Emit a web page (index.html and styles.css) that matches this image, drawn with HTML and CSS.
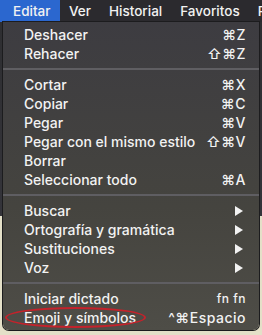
FILE: index.html
```html
<!DOCTYPE html>
<html>
<head>
<meta charset="utf-8">
<link rel="stylesheet" href="styles.css">
</head>
<body>
<div class="screen">
  <div class="menubar">
    <span class="mtitle active">Editar</span>
    <span class="mtitle">Ver</span>
    <span class="mtitle">Historial</span>
    <span class="mtitle">Favoritos</span>
    <span class="mtitle last">P</span>
  </div>
  <div class="stage">
    <div class="menu">
      <div class="item"><span>Deshacer</span><span class="key">⌘Z</span></div>
      <div class="item"><span>Rehacer</span><span class="key">⇧⌘Z</span></div>
      <div class="sep"></div>
      <div class="item"><span>Cortar</span><span class="key">⌘X</span></div>
      <div class="item"><span>Copiar</span><span class="key">⌘C</span></div>
      <div class="item"><span>Pegar</span><span class="key">⌘V</span></div>
      <div class="item"><span>Pegar con el mismo estilo</span><span class="key">⇧⌘V</span></div>
      <div class="item"><span>Borrar</span></div>
      <div class="item"><span>Seleccionar todo</span><span class="key">⌘A</span></div>
      <div class="sep"></div>
      <div class="item"><span>Buscar</span><span class="arrow"></span></div>
      <div class="item"><span>Ortografía y gramática</span><span class="arrow"></span></div>
      <div class="item"><span>Sustituciones</span><span class="arrow"></span></div>
      <div class="item"><span>Voz</span><span class="arrow"></span></div>
      <div class="sep"></div>
      <div class="item"><span>Iniciar dictado</span><span class="key small">fn fn</span></div>
      <div class="item"><span>Emoji y símbolos</span><span class="key">^⌘Espacio</span><span class="ring"></span></div>
    </div>
  </div>
</div>
</body>
</html>
```
FILE: styles.css
```css
* { box-sizing: border-box; }
html, body { margin: 0; padding: 0; }
body {
  width: 262px;
  height: 335px;
  overflow: hidden;
  background: #d9d6c4;
  font-family: Inter, "Liberation Sans", sans-serif;
  color: #f2f2f2;
}
.screen { width: 262px; height: 335px; display: flex; flex-direction: column; overflow: hidden; }
.menubar {
  height: 22px;
  background: #2b2a2e;
  display: flex;
  align-items: center;
  font-size: 13.5px;
  font-weight: 500;
  flex: none;
  overflow: hidden;
  white-space: nowrap;
}
.mtitle { height: 22px; line-height: 22px; padding: 0 9px; flex: none; }
.mtitle.active { background: #2b67cf; padding: 0 10px 0 13px; width: 60px; }
.mtitle.last { padding-right: 0; }
.stage {
  flex: 1;
  background: linear-gradient(to bottom, #2e2e31 0, #34343a 62%, #e4e0c8 62%, #e4e0c8 100%);
  padding: 0 3px;
  position: relative;
}
.menu {
  background: linear-gradient(to bottom, #3d3c41 0%, #45443f 60%, #4e4d47 100%);
  border-radius: 0 0 6px 6px;
  padding: 3px 0 4px 0;
  height: 308px;
  box-shadow: 0 0 0 1px #1c1c1e;
}
.item {
  height: 19px;
  display: flex;
  align-items: center;
  justify-content: space-between;
  padding: 0 13px 0 21px;
  font-size: 14px;
  font-weight: 500;
  position: relative;
}
.key { font-size: 14px; letter-spacing: 0.5px; }
.key.small { font-size: 12px; }
.arrow {
  width: 0; height: 0;
  border-left: 8px solid #f2f2f2;
  border-top: 5px solid transparent;
  border-bottom: 5px solid transparent;
  margin-right: 3px;
}
.sep { height: 2px; background: #5f5e62; margin: 5px 0; }
.ring {
  position: absolute;
  left: 2px;
  top: -1px;
  width: 141px;
  height: 21px;
  border: 2px solid #c4222b;
  border-radius: 50%;
}
```
